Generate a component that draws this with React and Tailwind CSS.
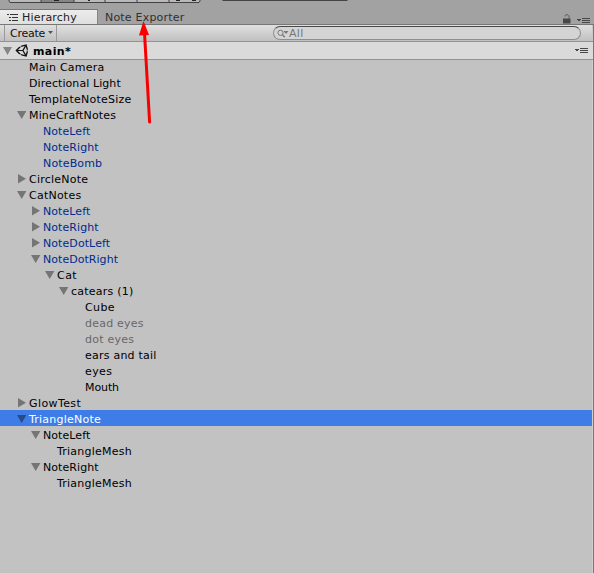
import { FaUnity } from 'react-icons/fa';

const rows = [
  ['Main Camera', 0, ''],
  ['Directional Light', 0, '', '', 'tracking-[0.08px]'],
  ['TemplateNoteSize', 0, ''],
  ['MineCraftNotes', 0, 'open', '', 'tracking-[0.15px]'],
  ['NoteLeft', 1, '', 'prefab', 'tracking-[0.08px]'],
  ['NoteRight', 1, '', 'prefab', 'tracking-[0.08px]'],
  ['NoteBomb', 1, '', 'prefab', 'tracking-[0.15px]'],
  ['CircleNote', 0, 'closed'],
  ['CatNotes', 0, 'open'],
  ['NoteLeft', 1, 'closed', 'prefab', 'tracking-[0.08px]'],
  ['NoteRight', 1, 'closed', 'prefab', 'tracking-[0.08px]'],
  ['NoteDotLeft', 1, 'closed', 'prefab', 'tracking-[0.08px]'],
  ['NoteDotRight', 1, 'open', 'prefab', 'tracking-[0.04px]'],
  ['Cat', 2, 'open', '', 'tracking-[0.45px]'],
  ['catears (1)', 3, 'open'],
  ['Cube', 4, '', '', 'tracking-[0.4px]'],
  ['dead eyes', 4, '', 'inactive'],
  ['dot eyes', 4, '', 'inactive'],
  ['ears and tail', 4, ''],
  ['eyes', 4, '', '', 'tracking-[0.4px]'],
  ['Mouth', 4, '', '', 'tracking-[-0.1px]'],
  ['GlowTest', 0, 'closed', '', 'tracking-[0.4px]'],
  ['TriangleNote', 0, 'open', 'selected'],
  ['NoteLeft', 1, 'open', '', 'tracking-[0.08px]'],
  ['TriangleMesh', 2, ''],
  ['NoteRight', 1, 'open', '', 'tracking-[0.08px]'],
  ['TriangleMesh', 2, ''],
];

const tones = {
  prefab: 'text-[#002a8c]',
  inactive: 'text-[#686868]',
  selected: 'bg-[#3e7de7] text-white',
};
const indents = ['pl-[15px]', 'pl-[29px]', 'pl-[43px]', 'pl-[57px]', 'pl-[71px]'];

function Fold({ state, selected }) {
  return (
    <svg className="h-4 w-[14px] shrink-0" viewBox="0 0 14 16">
      {state === 'open' && <path d="M2 5h9.4L6.7 13z" fill={selected ? '#254b8b' : '#757575'} />}
      {state === 'closed' && <path d="M3 4v9.4L11 8.7z" fill="#757575" />}
    </svg>
  );
}

function MenuIcon() {
  return (
    <svg className="h-[7px] w-[13px]" viewBox="0 0 13 7" shapeRendering="crispEdges">
      <path d="M0 2h4v1H3v1H2v1H1.5V4H1V3H0z" fill="#484848" />
      <path d="M5 1h8v1H5zM5 3h8v1H5zM5 5h8v1H5z" fill="#484848" />
    </svg>
  );
}

function Toolbar() {
  return (
    <div className="flex h-[3px] shrink-0 items-start overflow-hidden">
      <svg className="h-[3px] w-[594px]" viewBox="0 0 594 3">
        <path d="M9 0h191v1l-1 1H10L9 1z" fill="#b9b9b9" />
        <path d="M41 0h33v2H41z" fill="#858585" />
        <path d="M9 0v1l1 1.5h189l1-1.5V0M41 0v2M74 0v2M105 0v2M137 0v2M169 0v2" fill="none" stroke="#424242" />
        <path d="M54 0h5v1h-5zM88 0h2v1h-2zM176 0h4v1h-4zM192 0h4v1h-4z" fill="#222" />
        <path d="M222 0h126l-1 1H223z" fill="#444" />
      </svg>
    </div>
  );
}

export default function App() {
  return (
    <div className="flex h-[573px] w-[594px] flex-col overflow-hidden bg-[#a2a2a2] font-['DejaVu_Sans',sans-serif] text-[11px] leading-4 text-black">
      <Toolbar />
      <div className="flex h-[21px] shrink-0 pt-[6px]">
        <div className="flex h-[16px] w-[98px] items-center border-t border-r border-t-[#777] border-r-[#858585] bg-gradient-to-b from-[#ececec] to-[#dedede] pl-[7px]">
          <svg className="mr-[4px] h-[10px] w-[11px]" viewBox="0 0 11 10" shapeRendering="crispEdges">
            <path d="M0 1h2v1H0zM3 1h8v1H3zM2 4h2v1H2zM5 4h6v1H5zM2 7h2v1H2zM5 7h6v1H5z" fill="#333" />
          </svg>
          <span className="tracking-[0.2px] text-[#222]">Hierarchy</span>
        </div>
        <span className="ml-[7px] pt-[1px] tracking-[0.2px] text-[#303030]">Note Exporter</span>
        <div className="ml-auto flex h-[15px] items-end gap-[6px] pr-[4px]">
          <svg className="h-[10px] w-[8px]" viewBox="0 0 8 10">
            <path d="M0 4.5h7.5V9.5H0z" fill="#484848" />
            <path d="M2 2.5V1.5L3 .8h2l1 1V5" fill="none" stroke="#606060" strokeWidth="1" />
          </svg>
          <MenuIcon />
        </div>
      </div>
      <div className="flex min-h-0 flex-1 flex-col border-t border-r border-t-[#777] border-r-[#777]">
        <div className="flex h-[16px] shrink-0 items-center border-r border-[#c8c8c8] bg-gradient-to-b from-[#e0e0e0] to-[#c0c0c0]">
          <div className="ml-1 flex h-[16px] w-[53px] items-center border-x border-[#999] pl-[5px]">
            <span className="w-[35px] pt-[2px] tracking-[-0.25px] text-[#111]">Create</span>
            <svg className="ml-[3px] mb-[1px] h-[3px] w-[5px] shrink-0" viewBox="0 0 5 3"><path d="M0 0h5L2.5 3z" fill="#555" /></svg>
          </div>
          <div className="ml-auto mr-[11px] flex h-[14px] w-[308px] items-center rounded-full border border-[#8e8e8e] border-t-[#484848] bg-[#d4d4d4] pl-[3px]">
            <svg className="h-[9px] w-[12px]" viewBox="0 0 12 9">
              <circle cx="3.5" cy="3.8" r="2.6" fill="none" stroke="#777" />
              <path d="M5.5 5.8l2.3 2.5" stroke="#777" strokeWidth="1.3" />
              <path d="M6.5 2h5L9 5z" fill="#777" />
            </svg>
            <span className="pt-[1px] tracking-[0.3px] text-[#777]">All</span>
          </div>
        </div>
        <div className="flex h-[19px] shrink-0 items-center border-y border-[#929292] bg-[#dadada] pr-[5px]">
          <svg className="ml-[3px] mt-[1px] h-[8px] w-[9px]" viewBox="0 0 9 8"><path d="M0 0h9L4.5 8z" fill="#868686" /></svg>
          <FaUnity className="ml-[3px] h-[15px] w-[15px] text-[#151515]" />
          <span className="ml-[3px] pt-[2px] font-bold tracking-[0.4px]">main*</span>
          <div className="ml-auto"><MenuIcon /></div>
        </div>
        <div className="flex min-h-0 flex-1 flex-col overflow-hidden bg-[#c2c2c2]">
          <div className="-mt-[2px]">
            {rows.map(([name, depth, state, tone, tracking], i) => (
              <div key={i} className={`flex h-4 items-start border-r border-[#cfcfcf] ${indents[depth]} ${tones[tone] || ''}`}>
                <Fold state={state} selected={tone === 'selected'} />
                <span className={`whitespace-pre pt-[2px] ${tracking || 'tracking-[0.23px]'}`}>{name}</span>
              </div>
            ))}
          </div>
          <div className="flex-1 border-r border-[#cfcfcf]" />
        </div>
      </div>
      <svg className="pointer-events-none absolute left-[134px] top-[18px] h-[108px] w-[20px]" viewBox="134 18 20 108">
        <path d="M144.5 33L149.6 122" stroke="#f90000" strokeWidth="3" strokeLinecap="round" />
        <path d="M143.5 21L139 35.5l10-.6z" fill="#f90000" />
      </svg>
    </div>
  );
}
